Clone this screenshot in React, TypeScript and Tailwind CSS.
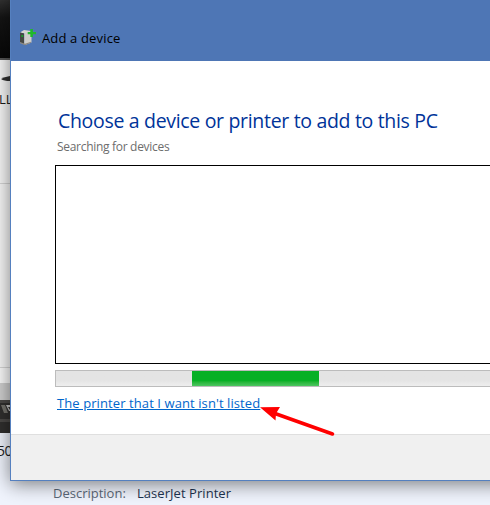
function DeviceIcon() {
  return (
    <svg width="17" height="18" viewBox="0 0 17 18" className="shrink-0">
      <path d="M1 4.5 5 2 12.5 3 8 6z" fill="#d6d6d2" />
      <path d="M1 4.5 5.2 5.4V16L1 14.5z" fill="#454845" />
      <path d="M5.2 5 12.5 3.5V14.5L6 17l-.8-1z" fill="#cfcfcb" />
      <path d="M1 14 6 15.8 12 13.8v1L6 17.3 1 15.3z" fill="#8d8981" />
      <path d="M2.3 7h2v2h-2z" fill="#1d9a30" />
      <path d="M11.3 1h2.6v2.9H17v2.4h-3.1v2.6h-2.6V6.3H8.7V3.9h2.6z" fill="#20b92b" />
    </svg>
  );
}

function Backdrop() {
  return (
    <div className="flex h-full flex-col">
      <div className="h-[60px] shrink-0 border-b-2 border-[#555] bg-linear-to-b from-[#333] via-[#151515] via-30% to-[#080808]" />
      <div className="h-[124px] shrink-0 border-b border-[#d5d5d5] bg-[#f7f7f7] pt-[15px]">
        <svg width="10" height="8" className="block">
          <path d="M1 4 Q4 2 10 1V6Q4 6 1 4Z" fill="#303030" />
        </svg>
        <span className="mt-[6px] -ml-px block text-[13px] leading-5 text-[#1d1d1d]">LL</span>
      </div>
      <div className="h-[184px] shrink-0 border-b border-[#d5d5d5] bg-[#f7f7f7]" />
      <div className="h-[15px] shrink-0 bg-[#fafafa]" />
      <div className="h-[17px] shrink-0 bg-[#cfcfcf]" />
      <svg width="10" height="33" className="shrink-0">
        <path d="M0 0h10v33H0z" fill="#302f2e" />
        <path d="M0 0h10v3H0zM0 19h10v3H0z" fill="#4b4947" />
        <path d="M1 5h4l3 8H4z" fill="#74736d" />
        <path d="M6 5h4v2H8l2 3v1H9z" fill="#c5c5c5" />
      </svg>
      <div className="min-h-0 flex-1 bg-[#f0f4fd] pt-2">
        <span className="-ml-[3px] block text-[14px] leading-5 tracking-[-0.4px] text-[#1d1d1d]">50</span>
        <div className="ml-[53px] mt-[22px] flex text-[13px] leading-5">
          <span className="w-[84px] text-[#5b6878]">Description:</span>
          <span className="tracking-[0.05px] text-[#1e3450]">LaserJet Printer</span>
        </div>
      </div>
    </div>
  );
}

export default function App() {
  return (
    <div className="relative h-[505px] w-[490px] overflow-hidden whitespace-nowrap bg-[#f0f4fd] font-['Open_Sans','Noto_Sans',sans-serif]">
      <Backdrop />
      <section className="absolute left-[10px] top-[-20px] flex h-[501px] w-[520px] flex-col border border-[#5580bf] bg-white shadow-[0_3px_18px_rgba(0,0,0,0.5)]">
        <header className="flex h-20 shrink-0 items-start bg-[#4e76b5] pl-2 pt-[47px] text-black">
          <DeviceIcon />
          <span className="ml-[6px] text-[13px] leading-5 tracking-[0.15px]">Add a device</span>
        </header>
        <main className="flex flex-1 flex-col pl-[44px]">
          <h1 className="ml-[3px] mt-[46px] text-[19.5px] leading-7 tracking-[-0.32px] text-[#003399]">Choose a device or printer to add to this PC</h1>
          <p className="ml-[2px] mt-[2px] text-[12px] leading-5 tracking-[-0.3px] text-[#6d6d6d]">Searching for devices</p>
          <div className="mt-[8px] h-[199px] shrink-0 border border-black" />
          <div className="mt-[6px] flex h-[17px] shrink-0 border border-[#bcbcbc] bg-linear-to-b from-[#e4e4e4] from-60% to-[#eee]">
            <div className="ml-[136px] w-[127px] bg-linear-to-b from-[#06b025] from-65% to-[#4bc660]" />
          </div>
          <a className="ml-[2px] mt-[6px] self-start text-[13px] leading-5 tracking-[0.09px] text-[#0066cc] underline underline-offset-1">The printer that I want isn't listed</a>
        </main>
        <footer className="h-[46px] shrink-0 border-t border-[#dfdfdf] bg-[#f0f0f0]" />
      </section>
      <svg width="76" height="32" viewBox="0 0 76 32" className="absolute left-[260px] top-[405px]">
        <path d="M15 8.5 72.5 29" stroke="#f00" strokeWidth="3.6" strokeLinecap="round" />
        <path d="M0 2.3 20 2 16 8.5 15.5 15.5Z" fill="#f00" />
      </svg>
    </div>
  );
}
